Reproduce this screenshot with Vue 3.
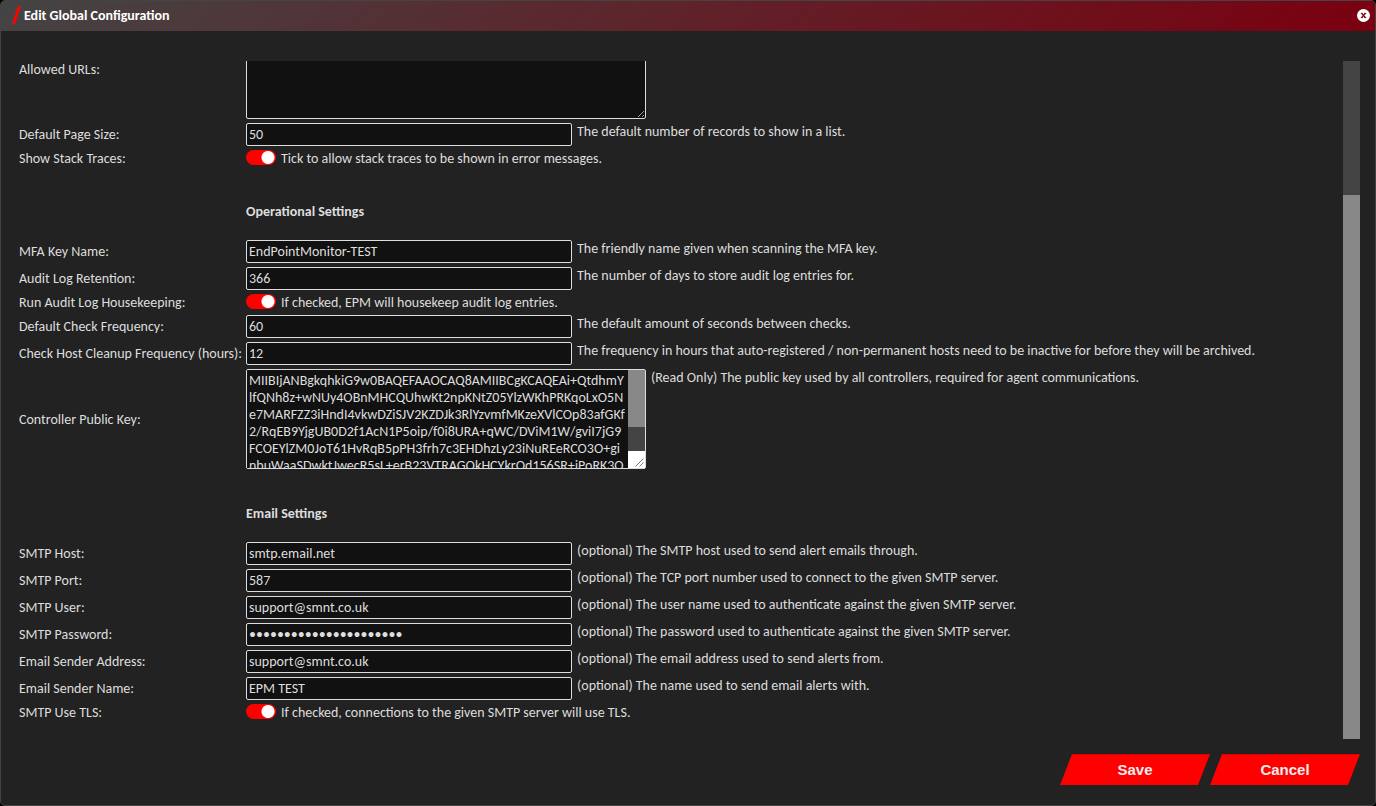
<script setup>
import { nextTick, onMounted, reactive, ref } from 'vue'

const publicKey =
  'MIIBIjANBgkqhkiG9w0BAQEFAAOCAQ8AMIIBCgKCAQEAi+QtdhmY\n' +
  'lfQNh8z+wNUy4OBnMHCQUhwKt2npKNtZ05YlzWKhPRKqoLxO5N\n' +
  'e7MARFZZ3iHndI4vkwDZiSJV2KZDJk3RlYzvmfMKzeXVlCOp83afGKf\n' +
  '2/RqEB9YjgUB0D2f1AcN1P5oip/f0i8URA+qWC/DViM1W/gviI7jG9\n' +
  'FCOEYlZM0JoT61HvRqB5pPH3frh7c3EHDhzLy23iNuREeRCO3O+gi\n' +
  'nbuWaaSDwktJwecR5sL+erB23VTRAGQkHCYkrQd156SR+jPoRK3O\n\n'

const rows = reactive([
  { id: 'urls', kind: 'area', label: 'Allowed URLs:', value: '' },
  { id: 'page-size', kind: 'text', label: 'Default Page Size:', value: '50', hint: 'The default number of records to show in a list.' },
  { id: 'traces', kind: 'toggle', label: 'Show Stack Traces:', value: true, hint: 'Tick to allow stack traces to be shown in error messages.' },
  { id: 'operational', kind: 'heading', label: 'Operational Settings' },
  { id: 'mfa', kind: 'text', label: 'MFA Key Name:', value: 'EndPointMonitor-TEST', hint: 'The friendly name given when scanning the MFA key.' },
  { id: 'retention', kind: 'text', label: 'Audit Log Retention:', value: '366', hint: 'The number of days to store audit log entries for.' },
  { id: 'housekeeping', kind: 'toggle', label: 'Run Audit Log Housekeeping:', value: true, hint: 'If checked, EPM will housekeep audit log entries.' },
  { id: 'frequency', kind: 'text', label: 'Default Check Frequency:', value: '60', hint: 'The default amount of seconds between checks.' },
  { id: 'cleanup', kind: 'text', label: 'Check Host Cleanup Frequency (hours):', value: '12', hint: 'The frequency in hours that auto-registered / non-permanent hosts need to be inactive for before they will be archived.' },
  { id: 'key', kind: 'area', label: 'Controller Public Key:', value: publicKey, readonly: true, hint: '(Read Only) The public key used by all controllers, required for agent communications.' },
  { id: 'email', kind: 'heading', label: 'Email Settings' },
  { id: 'host', kind: 'text', label: 'SMTP Host:', value: 'smtp.email.net', hint: '(optional) The SMTP host used to send alert emails through.' },
  { id: 'port', kind: 'text', label: 'SMTP Port:', value: '587', hint: '(optional) The TCP port number used to connect to the given SMTP server.' },
  { id: 'user', kind: 'text', label: 'SMTP User:', value: 'support@smnt.co.uk', hint: '(optional) The user name used to authenticate against the given SMTP server.' },
  { id: 'password', kind: 'password', label: 'SMTP Password:', value: 'xxxxxxxxxxxxxxxxxxxxxx', hint: '(optional) The password used to authenticate against the given SMTP server.' },
  { id: 'sender', kind: 'text', label: 'Email Sender Address:', value: 'support@smnt.co.uk', hint: '(optional) The email address used to send alerts from.' },
  { id: 'sender-name', kind: 'text', label: 'Email Sender Name:', value: 'EPM TEST', hint: '(optional) The name used to send email alerts with.' },
  { id: 'tls', kind: 'toggle', label: 'SMTP Use TLS:', value: true, hint: 'If checked, connections to the given SMTP server will use TLS.' }
])

const scroller = ref(null)
const pageThumb = reactive({ top: '0%', height: '100%' })
const keyThumb = reactive({ top: '0%', height: '100%' })

function track(thumb, element) {
  thumb.top = (element.scrollTop / element.scrollHeight) * 100 + '%'
  thumb.height = (element.clientHeight / element.scrollHeight) * 100 + '%'
}

onMounted(async () => {
  await nextTick()
  scroller.value.scrollTop = scroller.value.scrollHeight
  track(pageThumb, scroller.value)
  track(keyThumb, document.getElementById('key'))
})
</script>

<template>
  <form class="dialog" @submit.prevent>
    <header class="titlebar">
      <svg class="slash" width="9" height="18" viewBox="0 0 9 18" aria-hidden="true">
        <path d="M6 0H9L3 18H0Z" fill="#f00" />
      </svg>
      <h1 class="title">Edit Global Configuration</h1>
      <button class="close" type="button" aria-label="Close">
        <svg width="13" height="13" viewBox="0 0 13 13" aria-hidden="true">
          <circle cx="6.5" cy="6.5" r="6.5" fill="#fff" />
          <path d="M4.6 4.4L8.4 8.6M8.4 4.4L4.6 8.6" stroke="#790513" stroke-width="1.4" />
          <path d="M3.8 4.4H5.8M7.2 4.4H9.2M3.8 8.6H5.8M7.2 8.6H9.2" stroke="#790513" stroke-width="1" />
        </svg>
      </button>
    </header>

    <div class="content">
      <div ref="scroller" class="scroller" @scroll="track(pageThumb, $event.target)">
        <div v-for="row in rows" :key="row.id" class="row" :class="'row-' + row.kind">
          <h2 v-if="row.kind === 'heading'" class="heading">{{ row.label }}</h2>
          <template v-else>
            <label class="label" :for="row.id">{{ row.label }}</label>
            <div class="field">
              <div v-if="row.readonly" class="key">
                <textarea :id="row.id" v-model="row.value" class="box area" readonly spellcheck="false" @scroll="track(keyThumb, $event.target)"></textarea>
                <div class="key-side" aria-hidden="true">
                  <div class="bar key-bar"><div class="thumb" :style="keyThumb"></div></div>
                  <svg class="corner" width="17" height="17" viewBox="0 0 17 17">
                    <path d="M7.5 15.5L15.5 7.5M11.5 15.5L15.5 11.5" stroke="#777" fill="none" />
                  </svg>
                </div>
              </div>
              <textarea v-else-if="row.kind === 'area'" :id="row.id" v-model="row.value" class="box area" spellcheck="false"></textarea>
              <input v-else-if="row.kind === 'toggle'" :id="row.id" v-model="row.value" class="toggle" type="checkbox" />
              <input v-else :id="row.id" v-model="row.value" class="box line" :type="row.kind" autocomplete="off" />
              <span v-if="row.hint" class="hint">{{ row.hint }}</span>
            </div>
          </template>
        </div>
      </div>
      <div class="bar" aria-hidden="true"><div class="thumb" :style="pageThumb"></div></div>
    </div>

    <footer class="actions">
      <button class="action" type="submit">Save</button>
      <button class="action" type="button">Cancel</button>
    </footer>
  </form>
</template>

<style>
body {
  background: #000;
}
</style>

<style scoped>
.dialog {
  box-sizing: border-box;
  height: 100vh;
  display: flex;
  flex-direction: column;
  border: 1px solid #444;
  border-radius: 5px;
  overflow: hidden;
  background: #222;
  color: #ddd;
  font-family: Calibri, Carlito, Lato, sans-serif;
  font-size: 14px;
  line-height: 17px;
}

.titlebar {
  display: flex;
  align-items: center;
  flex: none;
  box-sizing: border-box;
  height: 30px;
  padding: 0 5px 2px 11px;
  background: linear-gradient(135deg, #444, #7b0010);
}

.slash {
  flex: none;
  margin-right: 3px;
}

.title {
  flex: 1;
  margin: 0;
  color: #fff;
  font-size: 14px;
  font-weight: bold;
}

.close {
  display: flex;
  padding: 0;
  border: 0;
  background: none;
  cursor: pointer;
}

.content {
  display: flex;
  flex: 1;
  min-height: 0;
  margin: 30px 15px 15px 18px;
}

.scroller {
  flex: 1;
  box-sizing: border-box;
  padding: 123px 0 16px;
  overflow-x: hidden;
  overflow-y: scroll;
  scrollbar-width: none;
}

.bar {
  flex: none;
  position: relative;
  width: 17px;
  background: #444;
}

.thumb {
  position: absolute;
  left: 0;
  width: 100%;
  background: #888;
}

.row {
  display: grid;
  grid-template-columns: 227px 1fr;
  align-items: center;
  padding: 2px 0;
}

.row-toggle {
  height: 17px;
}

.row-heading {
  padding: 34px 0 18px;
}

.heading {
  grid-column: 2;
  margin: 0;
  font-size: 14px;
  font-weight: bold;
}

.label {
  white-space: nowrap;
}

.field {
  display: flex;
  align-items: flex-start;
  gap: 5px;
}

.box {
  box-sizing: border-box;
  display: block;
  margin: 0;
  border: 1px solid #ddd;
  border-radius: 2px;
  outline: none;
  background: #111;
  color: #ddd;
  font-family: inherit;
  font-size: 14px;
  line-height: 17px;
}

.line {
  width: 326px;
  height: 23px;
  padding: 1px 2px;
}

.area {
  width: 400px;
  height: 100px;
  padding: 2px;
  resize: both;
  white-space: pre;
  overflow-x: hidden;
  scrollbar-width: none;
}

.key {
  position: relative;
}

.key-side {
  position: absolute;
  top: 1px;
  right: 1px;
  bottom: 1px;
  display: flex;
  flex-direction: column;
  pointer-events: none;
}

.key-bar {
  flex: 1;
}

.corner {
  flex: none;
  background: #fff;
}

.toggle {
  appearance: none;
  flex: none;
  width: 30px;
  height: 15px;
  margin: 0;
  border-radius: 8px;
  background: radial-gradient(circle at 8px 50%, #fff 6px, transparent 7px) #666;
  cursor: pointer;
}

.toggle:checked {
  background: radial-gradient(circle at 22px 50%, #fff 6px, transparent 7px) #f00;
}

.actions {
  display: flex;
  justify-content: flex-end;
  flex: none;
  padding: 0 15px 20px;
}

.action {
  width: 150px;
  height: 31px;
  padding: 0 0 2px;
  border: 0;
  border-top: 1px solid #d00;
  background: #f00;
  color: #eee;
  clip-path: polygon(12px 0, 100% 0, calc(100% - 12px) 100%, 0 100%);
  font-family: Arial, "Liberation Sans", sans-serif;
  font-size: 15px;
  font-weight: bold;
  cursor: pointer;
}
</style>
